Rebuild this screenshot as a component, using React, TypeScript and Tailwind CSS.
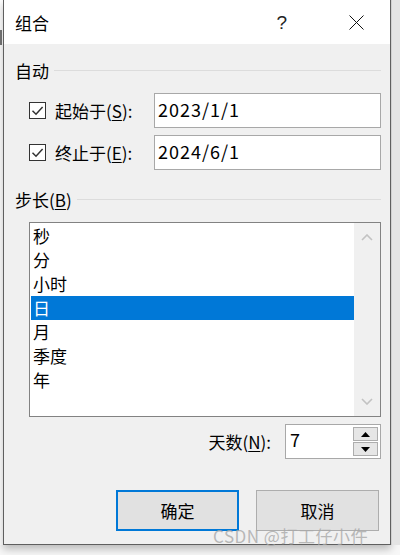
import React from "react";

const font = { fontFamily: '"Noto Sans CJK SC", "Noto Sans", sans-serif' };

const Check = () => (
  <div className="w-[17px] h-[17px] border border-[#333] bg-white flex items-center justify-center">
    <svg width="13" height="13" viewBox="0 0 13 13" fill="none">
      <path d="M1.5 6.8 L5 10.2 L11.6 3" stroke="#333" strokeWidth="1.5" />
    </svg>
  </div>
);

const GroupHeader = ({ label, className }: { label: React.ReactNode; className: string }) => (
  <div className={`flex items-center h-6 ${className}`}>
    <span className="text-[17px] text-black leading-none">{label}</span>
    <div className="flex-1 h-px bg-[#dcdcdc] ml-[5px]" />
  </div>
);

const items = ["秒", "分", "小时", "日", "月", "季度", "年"];

export default function App() {
  return (
    <div className="w-[400px] h-[555px] bg-[#f7f7f7] overflow-hidden relative" style={font}>
      <div className="flex h-[545px]">
        <div className="w-[3px] bg-white flex flex-col">
          <div className="h-[30px]" />
          <div className="h-[15px] w-[2px] bg-[#777]" />
        </div>
        <div className="w-[388px] border border-t-0 border-[#5f5f5f] bg-[#f0f0f0] flex flex-col shadow-[0_4px_8px_rgba(0,0,0,0.25)]">
          <div className="h-[44px] bg-white flex items-center pl-[11px] pr-[26px]">
            <span className="text-[17px] leading-none text-black flex-1">组合</span>
            <span className="text-[19px] leading-none text-[#222] mr-[62px]" style={{ fontFamily: '"Liberation Sans", sans-serif' }}>?</span>
            <svg width="15" height="15" viewBox="0 0 15 15">
              <path d="M0.5 0.5 L14.5 14.5 M14.5 0.5 L0.5 14.5" stroke="#111" strokeWidth="1" />
            </svg>
          </div>
          <div className="flex flex-col pl-[11px] pr-[9px]">
            <GroupHeader label="自动" className="mt-[14px]" />
            <div className="flex items-center h-[35px] mt-[11px]">
              <div className="ml-[14px] w-[26px]"><Check /></div>
              <span className="text-[17px] leading-none w-[99px]">起始于(<span className="underline underline-offset-2">S</span>):</span>
              <div className="flex-1 h-full bg-white border border-[#a8a8a8] pl-[3px] pt-[2px] text-[18px] leading-[26px] tracking-[1px]">2023/1/1</div>
            </div>
            <div className="flex items-center h-[35px] mt-[7px]">
              <div className="ml-[14px] w-[26px]"><Check /></div>
              <span className="text-[17px] leading-none w-[99px]">终止于(<span className="underline underline-offset-2">E</span>):</span>
              <div className="flex-1 h-full bg-white border border-[#a8a8a8] pl-[3px] pt-[2px] text-[18px] leading-[26px] tracking-[1px]">2024/6/1</div>
            </div>
            <GroupHeader label={<>步长(<span className="underline underline-offset-2">B</span>)</>} className="mt-[17px]" />
            <div className="ml-[14px] mt-[11px] h-[195px] border border-[#828282] bg-white flex">
              <div className="flex-1 pt-[1px] pl-[1px]">
                {items.map((t) => (
                  <div
                    key={t}
                    className={`h-6 pl-[2px] text-[17px] leading-6 ${t === "日" ? "bg-[#0078d7] text-white" : "text-black"}`}
                  >
                    {t}
                  </div>
                ))}
              </div>
              <div className="w-[26px] bg-[#f0f0f0] flex flex-col items-center justify-between py-[11px]">
                <svg width="12" height="7" viewBox="0 0 12 7" fill="none">
                  <path d="M1 6 L6 1 L11 6" stroke="#c2c2c2" strokeWidth="1.6" />
                </svg>
                <svg width="12" height="7" viewBox="0 0 12 7" fill="none">
                  <path d="M1 1 L6 6 L11 1" stroke="#c2c2c2" strokeWidth="1.6" />
                </svg>
              </div>
            </div>
            <div className="flex items-center justify-end h-[35px] mt-[7px]">
              <span className="text-[17px] leading-none mr-[14px]">天数(<span className="underline underline-offset-2">N</span>):</span>
              <div className="w-[96px] h-full bg-white border border-[#a8a8a8] flex">
                <div className="flex-1 pl-[4px] pt-[1px] text-[18px] leading-[26px]">7</div>
                <div className="w-[25px] flex flex-col gap-px py-[2px] mr-[2px]">
                  <div className="flex-1 bg-[#e6e6e6] border border-[#adadad] flex items-center justify-center">
                    <svg width="9" height="5" viewBox="0 0 9 5"><path d="M0 5 L4.5 0 L9 5 Z" fill="#000" /></svg>
                  </div>
                  <div className="flex-1 bg-[#e6e6e6] border border-[#adadad] flex items-center justify-center">
                    <svg width="9" height="5" viewBox="0 0 9 5"><path d="M0 0 L4.5 5 L9 0 Z" fill="#000" /></svg>
                  </div>
                </div>
              </div>
            </div>
            <div className="flex justify-end gap-[17px] mt-[31px] mr-[2px]">
              <button className="w-[123px] h-[41px] bg-[#e1e1e1] border-2 border-[#0078d7] text-[17px] text-black">确定</button>
              <button className="w-[123px] h-[41px] bg-[#e1e1e1] border border-[#adadad] text-[17px] text-black">取消</button>
            </div>
          </div>
        </div>
        <div className="flex-1 bg-[#e4e4e4] border-l border-[#d0d0d0]" />
      </div>
      <div className="absolute left-[213px] top-[526px] text-[17px] leading-5 text-[#a8a8a8]/80 tracking-[0.5px]">
        CSDN @打工仔小仵
      </div>
    </div>
  );
}
